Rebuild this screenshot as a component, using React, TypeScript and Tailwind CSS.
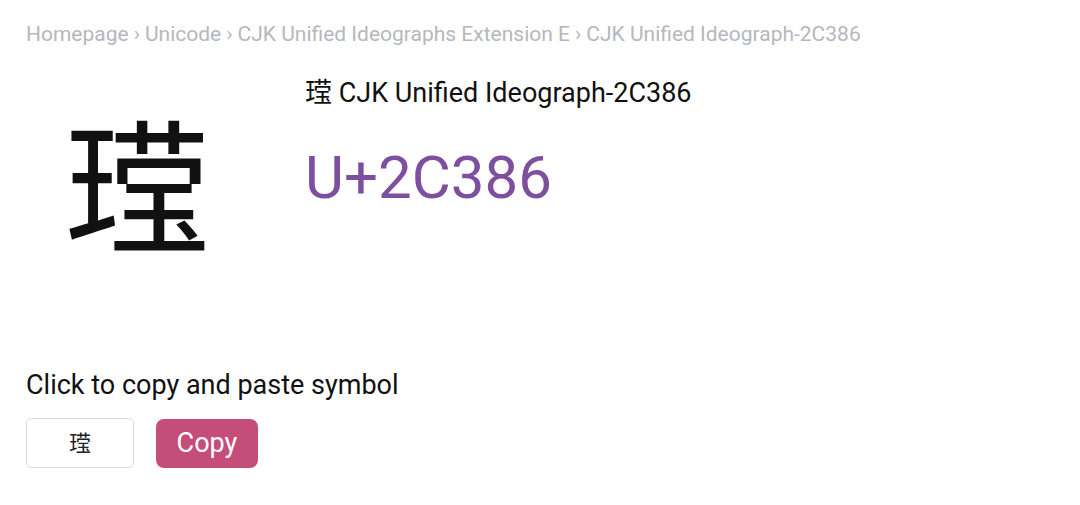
import React from 'react';

const CHAR = '\u{2C386}';

const crumbs = ['Homepage', 'Unicode', 'CJK Unified Ideographs Extension E', 'CJK Unified Ideograph-2C386'];

const App: React.FC = () => {
  return (
    <div className="min-h-screen bg-white px-[26px] pt-[20px] font-['Roboto','Noto_Sans_CJK_SC',sans-serif]">
      {/* breadcrumbs */}
      <div className="text-[21px] leading-[28px] text-[#b4b8be]">
        {crumbs.map((c, i) => (
          <span key={c}>
            {i > 0 && <span className="mx-[5px]">›</span>}
            {c}
          </span>
        ))}
      </div>

      <div className="mt-[26px] flex">
        <div className="flex w-[279px] items-start pl-[38px] pt-[31px]">
          <span className="font-['Noto_Serif_CJK_SC','Noto_Sans_CJK_SC',serif] text-[146px] leading-[150px] text-[#111]">{CHAR}</span>
        </div>
        <div className="flex flex-col">
          <div className="text-[27px] leading-[34px] text-[#111]">
            <span className="font-['Noto_Sans_CJK_SC',sans-serif]">{CHAR}</span> CJK Unified Ideograph-2C386
          </div>
          <div className="mt-[33px] text-[60px] leading-[70px] text-[#7e4f9e]">U+2C386</div>
        </div>
      </div>

      <div className="mt-[114px] text-[27px] leading-[32px] text-[#111]">Click to copy and paste symbol</div>
      <div className="mt-[17px] flex items-center gap-[22px]">
        <div className="flex h-[50px] w-[108px] items-center justify-center rounded-[5px] border border-[#dcdcdc] text-[22px] text-[#222]">
          {CHAR}
        </div>
        <button className="h-[49px] w-[102px] rounded-[8px] bg-[#c44d7a] text-[27px] text-white">Copy</button>
      </div>
    </div>
  );
};

export default App;
